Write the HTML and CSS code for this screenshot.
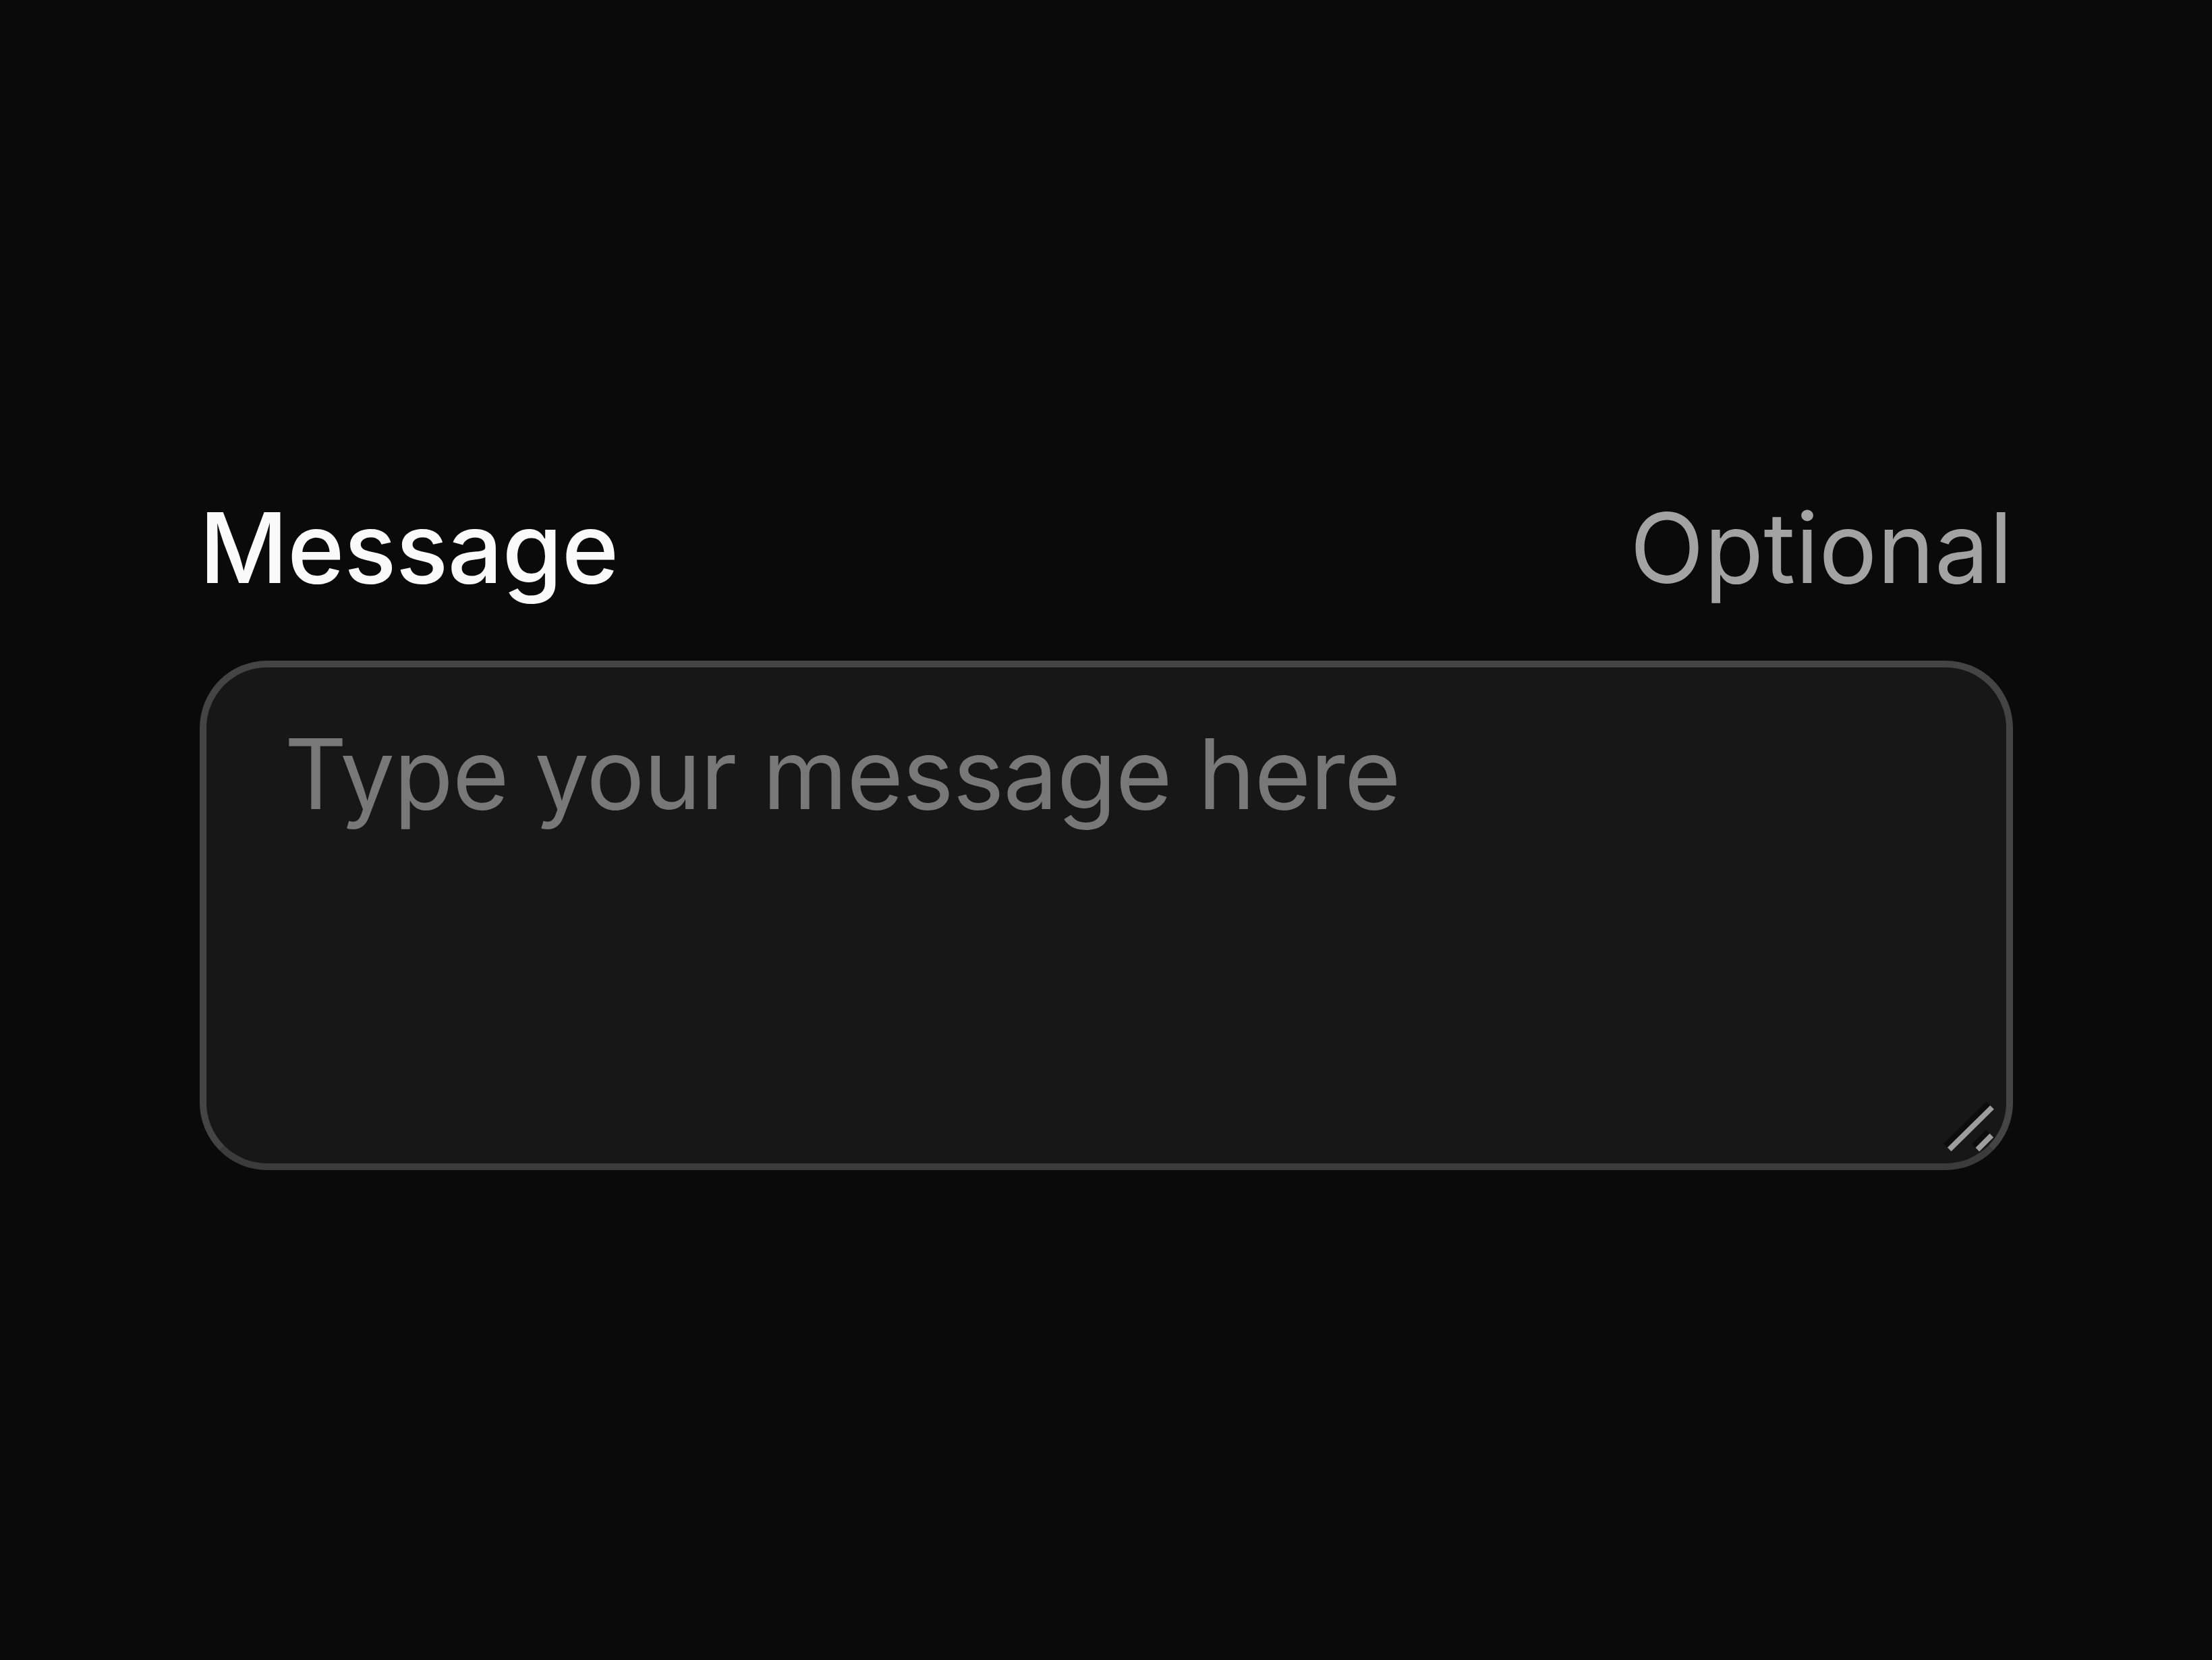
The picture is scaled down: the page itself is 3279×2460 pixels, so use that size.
FILE: index.html
```html
<!DOCTYPE html>
<html lang="en">
<head>
<meta charset="utf-8">
<title>Message</title>
<link rel="stylesheet" href="styles.css">
</head>
<body>
  <main class="page">
    <div class="field">
      <div class="field-head">
        <label class="field-label" for="msg">Message</label>
        <span class="field-hint">Optional</span>
      </div>
      <div class="textarea" id="msg" role="textbox" aria-multiline="true">
        <span class="placeholder">Type your message here</span>
        <svg class="grip" viewBox="0 0 100 100" width="100" height="100" aria-hidden="true">
          <line x1="12" y1="76.6" x2="75.3" y2="14.3" stroke="#0c0c0c" stroke-width="8"/>
          <line x1="17.7" y1="82.3" x2="81" y2="20" stroke="#9d9d9d" stroke-width="8"/>
          <line x1="53.6" y1="77" x2="74.6" y2="56" stroke="#0c0c0c" stroke-width="8"/>
          <line x1="59.3" y1="82.7" x2="80.3" y2="61.7" stroke="#9d9d9d" stroke-width="8"/>
        </svg>
      </div>
    </div>
  </main>
</body>
</html>
```
FILE: styles.css
```css
* { box-sizing: border-box; }
html, body { margin: 0; padding: 0; }
body {
  background: #0a0a0a;
  font-family: Inter, "Noto Sans", "Liberation Sans", sans-serif;
}
.page {
  min-height: 100vh;
  padding-top: 14px;
  display: flex;
  align-items: center;
  justify-content: center;
}
.field {
  width: 2688px;
  display: flex;
  flex-direction: column;
  gap: 95px;
}
.field-head {
  display: flex;
  justify-content: space-between;
  align-items: baseline;
  font-size: 144px;
  line-height: 144px;
}
.field-label {
  color: #fafafa;
  font-weight: 500;
  letter-spacing: -0.8px;
}
.field-hint {
  color: #a3a3a3;
  font-weight: 400;
}
.textarea {
  position: relative;
  height: 755px;
  background: #171717;
  border: 10px solid #444444;
  border-bottom-color: #3b3b3b;
  border-radius: 100px;
  padding: 50px 116px;
  font-size: 144px;
  line-height: 216px;
}
.placeholder {
  color: #787878;
  letter-spacing: -1.3px;
}
.grip {
  position: absolute;
  right: 2px;
  bottom: 3px;
}
```
